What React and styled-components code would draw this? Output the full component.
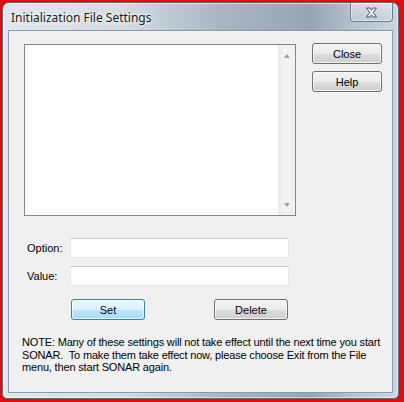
import styled, { createGlobalStyle } from 'styled-components';

const GlobalStyle = createGlobalStyle`
  html, body {
    margin: 0;
    padding: 0;
    background: #dc0f17;
  }
  #root {
    width: 404px;
    height: 402px;
    overflow: hidden;
  }
`;

const Window = styled.div`
  // aero-style dialog frame
  box-sizing: border-box;
  width: 397px;
  height: 397px;
  margin: 2px 0 0 2px;
  display: flex;
  flex-direction: column;
  border: 1px solid #5d6873;
  border-radius: 7px 7px 5px 5px;
  padding: 0 5px 5px 5px;
  background:
    linear-gradient(90deg, #e0e7ed 0%, #d3dce4 30%, #aab6c2 55%, #97a5b3 78%, #b4c0cb 88%, #ccd5de 100%);
  box-shadow: inset 0 0 0 1px rgba(255,255,255,0.55);
  font-family: "Liberation Sans", Arial, sans-serif;
`;

const TitleBar = styled.div`
  height: 27px;
  display: flex;
  align-items: flex-start;
  justify-content: space-between;
`;

const Title = styled.div`
  font-family: "Noto Sans", "Open Sans", sans-serif;
  font-size: 12px;
  color: #1c1c1c;
  padding: 6px 0 0 3px;
  text-shadow: 0 0 8px rgba(255,255,255,0.9), 0 0 3px rgba(255,255,255,0.9);
`;

const CloseX = styled.div`
  box-sizing: border-box;
  width: 43px;
  height: 19px;
  display: flex;
  align-items: center;
  justify-content: center;
  border: 1px solid #6e7c8a;
  border-top: none;
  border-radius: 0 0 4px 4px;
  background: linear-gradient(180deg, rgba(235,240,245,0.55), rgba(200,210,220,0.45));
  box-shadow: inset 0 0 0 1px rgba(255,255,255,0.5);
`;

const Client = styled.div`
  flex: 1;
  background: #f0f0f0;
  border: 1px solid #8e9bab;
  padding-top: 12px;
  display: flex;
  flex-direction: column;
  font-size: 11px;
  color: #000;
`;

const TopRow = styled.div`
  display: flex;
  align-items: flex-start;
  padding-left: 15px;
`;

const ListBox = styled.div`
  box-sizing: border-box;
  width: 272px;
  height: 172px;
  margin-top: 1px;
  border: 1px solid #828790;
  background: #fff;
  display: flex;
  justify-content: flex-end;
`;

const ScrollBar = styled.div`
  width: 17px;
  background: linear-gradient(90deg, #e9e9e9, #f4f4f4 40%, #f0f0f0);
  display: flex;
  flex-direction: column;
  justify-content: space-between;
  align-items: center;
  padding: 9px 0 8px;
`;

const Arrow = styled.div`
  width: 0;
  height: 0;
  border-left: 3.5px solid transparent;
  border-right: 3.5px solid transparent;
  ${({ $down }) => ($down ? 'border-top: 4px solid #a0a0a0;' : 'border-bottom: 4px solid #a0a0a0;')}
`;

const SideButtons = styled.div`
  display: flex;
  flex-direction: column;
  gap: 7px;
  margin-left: 16px;
`;

const Button = styled.button`
  box-sizing: border-box;
  width: ${({ $w }) => $w || 70}px;
  height: 21px;
  padding: 0;
  font-family: "Liberation Sans", Arial, sans-serif;
  font-size: 11px;
  color: #000;
  border-radius: 3px;
  border: 1px solid ${({ $default }) => ($default ? '#3c7fb1' : '#707070')};
  background: ${({ $default }) =>
    $default
      ? 'linear-gradient(180deg, #eaf6fd 0%, #d9f0fc 50%, #bee6fd 51%, #a7d9f5 100%)'
      : 'linear-gradient(180deg, #f2f2f2 0%, #ebebeb 50%, #dddddd 51%, #cfcfcf 100%)'};
  box-shadow: inset 0 0 0 1px rgba(255,255,255,0.7);
`;

const FieldRow = styled.div`
  display: flex;
  align-items: center;
  padding-left: 15px;
  margin-top: ${({ $top }) => $top}px;
`;

const Label = styled.label`
  width: 46px;
  padding-left: 3px;
  box-sizing: border-box;
`;

const Field = styled.div`
  box-sizing: border-box;
  width: 219px;
  height: 20px;
  background: #fff;
  border: 1px solid #e3e9ef;
  border-top-color: #c9cdd2;
`;

const ButtonRow = styled.div`
  display: flex;
  gap: 69px;
  padding-left: 62px;
  margin-top: 13px;
`;

const Note = styled.p`
  margin: 16px 0 0 0;
  padding-left: 13px;
  line-height: 12.5px;
  letter-spacing: -0.17px;
  white-space: nowrap;
`;

const XGlyph = () => (
  <svg width="13" height="11" viewBox="0 0 13 11">
    <path
      d="M1.5 1 H5 L6.5 3.2 L8 1 H11.5 L8.3 5.5 L11.5 10 H8 L6.5 7.8 L5 10 H1.5 L4.7 5.5 Z"
      fill="#f4f6f8"
      stroke="#4a5560"
      strokeWidth="1"
      strokeLinejoin="round"
    />
  </svg>
);

export default function App() {
  return (
    <>
      <GlobalStyle />
      <Window>
        <TitleBar>
          <Title>Initialization File Settings</Title>
          <CloseX>
            <XGlyph />
          </CloseX>
        </TitleBar>
        <Client>
          <TopRow>
            <ListBox>
              <ScrollBar>
                <Arrow />
                <Arrow $down />
              </ScrollBar>
            </ListBox>
            <SideButtons>
              <Button>Close</Button>
              <Button>Help</Button>
            </SideButtons>
          </TopRow>
          <FieldRow $top={22}>
            <Label>Option:</Label>
            <Field />
          </FieldRow>
          <FieldRow $top={8}>
            <Label>Value:</Label>
            <Field />
          </FieldRow>
          <ButtonRow>
            <Button $w={74} $default>Set</Button>
            <Button $w={74}>Delete</Button>
          </ButtonRow>
          <Note>
            NOTE: Many of these settings will not take effect until the next time you start
            <br />
            SONAR.&nbsp; To make them take effect now, please choose Exit from the File
            <br />
            menu, then start SONAR again.
          </Note>
        </Client>
      </Window>
    </>
  );
}
